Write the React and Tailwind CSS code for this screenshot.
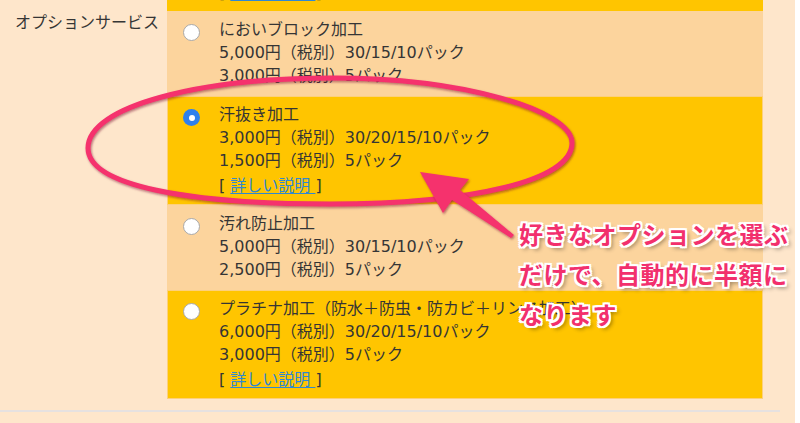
import React from 'react';

const options = [
  {
    name: 'においブロック加工',
    prices: ['5,000円（税別）30/15/10パック', '3,000円（税別）5パック'],
  },
  {
    name: '汗抜き加工',
    prices: ['3,000円（税別）30/20/15/10パック', '1,500円（税別）5パック'],
    link: true,
    checked: true,
  },
  {
    name: '汚れ防止加工',
    prices: ['5,000円（税別）30/15/10パック', '2,500円（税別）5パック'],
  },
  {
    name: 'プラチナ加工（防水＋防虫・防カビ＋リンス加工）',
    prices: ['6,000円（税別）30/20/15/10パック', '3,000円（税別）5パック'],
    link: true,
  },
];

const DetailLink = ({ className = '' }) => (
  <div className={`leading-[23px] whitespace-pre ${className}`}>
    {'[ '}
    <a href="#" className="text-[#2f88d2] underline underline-offset-2 decoration-1">
      {'詳しい説明 '}
    </a>
    {']'}
  </div>
);

const Radio = ({ checked }) =>
  checked ? (
    <span className="mt-[6px] flex h-[17px] w-[17px] shrink-0 items-center justify-center rounded-full bg-[#2f80ed]">
      <span className="h-[6px] w-[6px] rounded-full bg-white" />
    </span>
  ) : (
    <span className="mt-[6px] h-[17px] w-[17px] shrink-0 rounded-full border border-[#a9a9a9] bg-white" />
  );

const OptionRow = ({ option, index }) => {
  const yellow = index % 2 === 1;
  return (
    <div
      className={`flex items-start pl-[16px] pt-[7px] ${option.link ? 'pb-[8px]' : 'pb-[9px]'} ${
        yellow ? 'bg-[#ffc500] shadow-[inset_0_0_0_1px_#fdd07c]' : 'bg-[#fcd49d]'
      }`}
    >
      <Radio checked={option.checked} />
      <div className="ml-[19px] whitespace-nowrap">
        <div className="leading-[23px]">{option.name}</div>
        {option.prices.map((p) => (
          <div key={p} className="leading-[23px]">
            {p}
          </div>
        ))}
        {option.link && <DetailLink className="mt-[2px]" />}
      </div>
    </div>
  );
};

// hand-drawn style annotation: loop around the selected row plus an arrow
const Annotation = () => (
  <svg className="pointer-events-none absolute left-0 top-0" width="800" height="423" viewBox="0 0 800 423">
    <defs>
      <filter id="mark-shadow" x="-10%" y="-10%" width="120%" height="130%">
        <feDropShadow dx="1" dy="1.5" stdDeviation="0.8" floodColor="#7a1030" floodOpacity="0.55" />
      </filter>
    </defs>
    <g filter="url(#mark-shadow)" fill="none" stroke="#f5306d" strokeWidth="5">
      <path d="M 88 148 C 88 106, 200 78, 333 78 C 462 78, 572 110, 572 143 C 572 181, 470 204, 330 204 C 190 204, 88 186, 88 148 Z" />
    </g>
    <g filter="url(#mark-shadow)">
      <polygon
        points="420,172 469,179 460,190 514,235 511,238 452,200 443,213"
        fill="#f5306d"
      />
    </g>
  </svg>
);

const calloutShadow =
  '[text-shadow:2px_0_0_#fff,-2px_0_0_#fff,0_2px_0_#fff,0_-2px_0_#fff,2px_2px_0_#fff,-2px_-2px_0_#fff,2px_-2px_0_#fff,-2px_2px_0_#fff,3px_3px_4px_rgba(0,0,0,0.45)]';

export default function App() {
  return (
    <div className="relative h-[423px] w-[800px] overflow-hidden bg-white font-['DejaVu_Sans','Noto_Sans_CJK_JP',sans-serif] text-[16px] text-[#353535]">
      <div className="h-[423px] w-[795px] bg-[#fee6cb]">
        <div className="w-[780px] border-b-2 border-[#e6e1e0] pb-[11px]">
          {/* tail end of the previous field */}
          <div className="flex">
            <div className="w-[167px]" />
            <div className="flex h-[11px] w-[596px] items-end overflow-hidden bg-[#ffc500] pb-[7px] pl-[52px]">
              <DetailLink className="shrink-0" />
            </div>
          </div>

          <div className="flex">
            <div className="w-[167px] shrink-0 pl-[15px] leading-[23px]">オプションサービス</div>
            <div className="w-[596px]">
              {options.map((o, i) => (
                <OptionRow key={o.name} option={o} index={i} />
              ))}
            </div>
          </div>
        </div>
      </div>

      <Annotation />

      <div
        className={`absolute left-[519px] top-[214px] font-['Noto_Sans_CJK_JP',sans-serif] text-[24px] font-bold leading-[40px] tracking-[0.5px] text-[#f2306d] ${calloutShadow}`}
      >
        <div>好きなオプションを選ぶ</div>
        <div>だけで、自動的に半額に</div>
        <div>なります</div>
      </div>
    </div>
  );
}
